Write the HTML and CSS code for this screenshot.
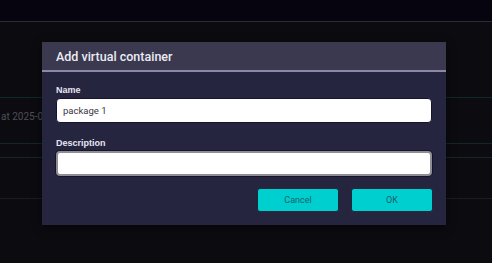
FILE: index.html
```html
<!DOCTYPE html>
<html lang="en">
<head>
  <meta charset="UTF-8">
  <title>Add virtual container</title>
  <link rel="stylesheet" href="styles.css">
</head>
<body>

  <div class="topbar"></div>
  <div class="panel"></div>
  <div class="rows">
    <div class="row row-tall">at 2025-09-12 10:42</div>
    <div class="row row-short"></div>
    <div class="row row-mid"></div>
  </div>

  <!-- Modal: add virtual container -->
  <div class="modal">
    <div class="modal-header">Add virtual container</div>
    <div class="modal-body">
      <label for="name">Name</label>
      <input type="text" id="name" value="package 1">
      <label for="description" class="label-desc">Description</label>
      <input type="text" id="description" class="focused">
      <div class="actions">
        <button>Cancel</button>
        <button>OK</button>
      </div>
    </div>
  </div>

</body>
</html>
```

FILE: styles.css
```css
body {
  margin: 0;
  background: #0b0b10;
  font-family: Roboto, "Liberation Sans", sans-serif;
  height: 263px;
  overflow: hidden;
}

.topbar {
  height: 21px;
  background: #05040f;
  border-bottom: 1px solid #2c2c33;
}

.panel {
  height: 75px;
  background: #0c0c10;
  border-bottom: 1px solid #12292c;
}

.row {
  border-bottom: 1px solid #142629;
  color: #4f4f55;
  font-size: 10px;
  box-sizing: border-box;
}

.row-tall {
  height: 46px;
  padding: 13px 0 0 1px;
}

.row-short {
  height: 14px;
}

.row-mid {
  height: 41px;
  border-bottom-color: #1c1c22;
}

.modal {
  position: absolute;
  left: 42px;
  top: 42px;
  width: 404px;
  height: 183px;
  background: #26253f;
  box-shadow: 0 2px 8px rgba(0,0,0,0.5);
}

.modal-header {
  height: 30px;
  background: #3a394f;
  border-bottom: 2px solid #8b8aa6;
  box-sizing: border-box;
  padding: 7px 14px 0;
  color: #ecebf4;
  font-size: 12.5px;
  font-weight: 500;
}

.modal-body {
  padding: 13px 14px 0;
}

label {
  display: block;
  color: #e6e6f4;
  font-family: "Liberation Sans", Arial, sans-serif;
  font-weight: bold;
  font-size: 9px;
  margin-bottom: 3px;
}

.label-desc {
  margin-top: 15px;
}

input {
  display: block;
  width: 100%;
  height: 25px;
  box-sizing: border-box;
  border: 1px solid #15142a;
  border-radius: 4px;
  background: #fff;
  padding: 0 6px;
  font-family: Roboto, "Liberation Sans", sans-serif;
  font-size: 9.5px;
  color: #3a3540;
  outline: none;
}

input.focused {
  border: 2px solid #8e8e94;
  box-shadow: 0 0 0 1px #15142a;
}

.actions {
  display: flex;
  justify-content: flex-end;
  gap: 12px;
  margin-top: 12px;
  margin-right: -1px;
}

button {
  width: 82px;
  height: 24px;
  background: #00cfcf;
  border: 1px solid #1b2a3c;
  border-radius: 3px;
  color: #1c5f6c;
  font-family: Roboto, "Liberation Sans", sans-serif;
  font-size: 9px;
}
```
